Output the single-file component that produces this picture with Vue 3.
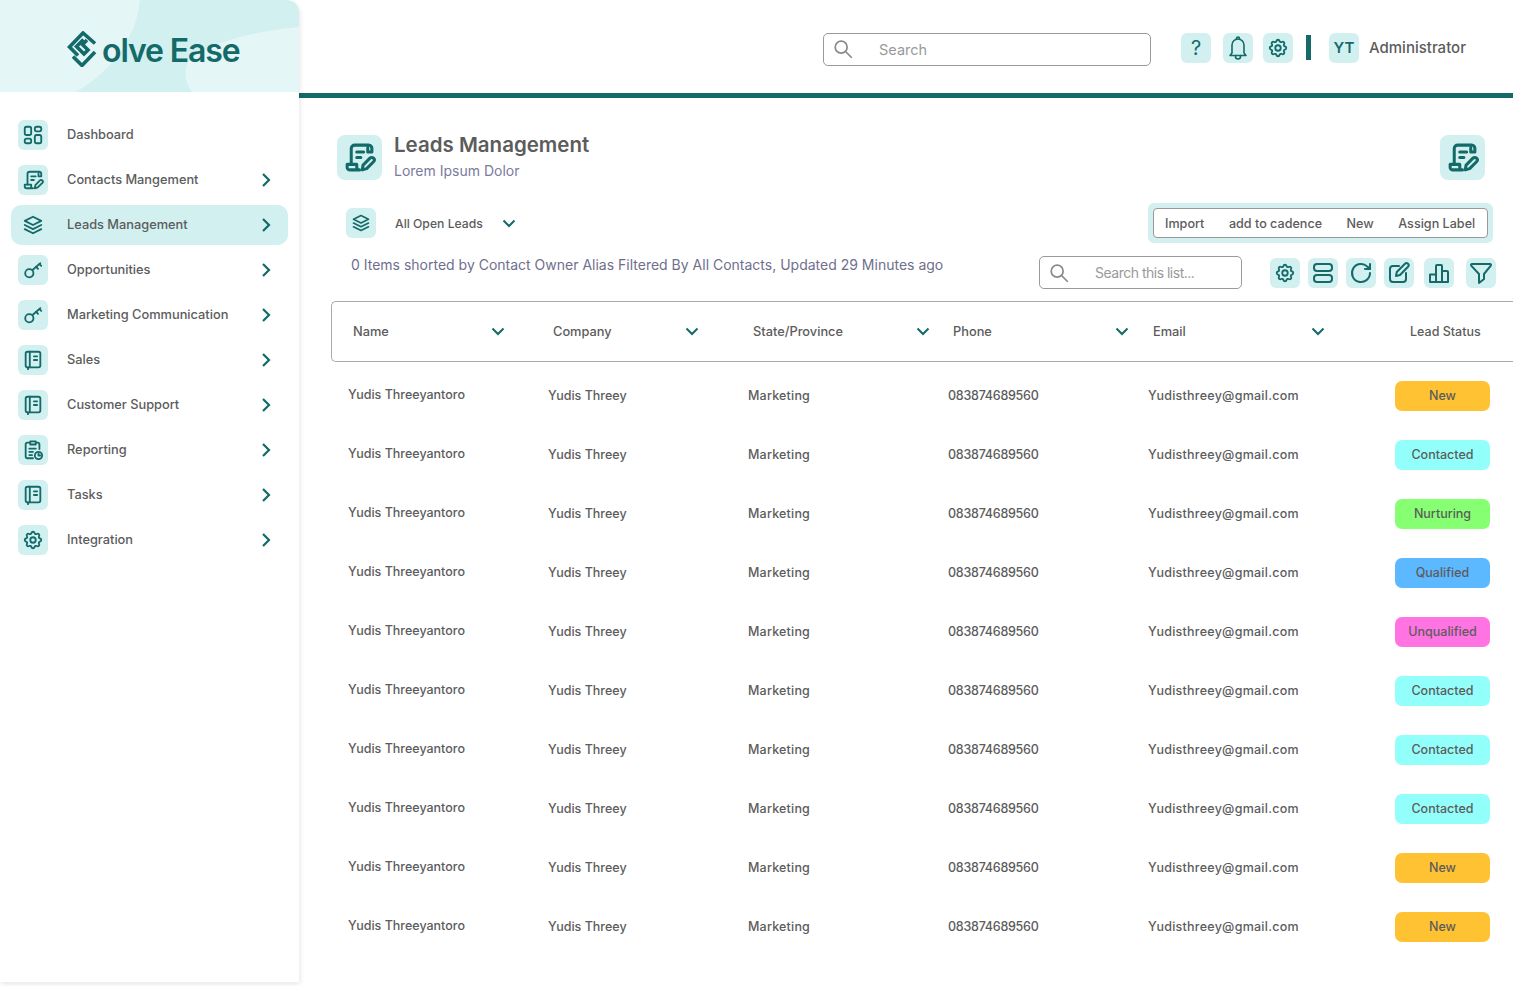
<script setup>
const icons = {
  grid: ['M5 3h3a2 2 0 0 1 2 2v5a2 2 0 0 1-2 2H5a2 2 0 0 1-2-2V5a2 2 0 0 1 2-2z', 'M16 3h3a2 2 0 0 1 2 2v1a2 2 0 0 1-2 2h-3a2 2 0 0 1-2-2V5a2 2 0 0 1 2-2z', 'M5 16h3a2 2 0 0 1 2 2v1a2 2 0 0 1-2 2H5a2 2 0 0 1-2-2v-1a2 2 0 0 1 2-2z', 'M16 12h3a2 2 0 0 1 2 2v5a2 2 0 0 1-2 2h-3a2 2 0 0 1-2-2v-5a2 2 0 0 1 2-2z'],
  scroll: ['M6 17V5.500A2.500 2.500 0 0 1 8.500 3H19a2.500 2.500 0 0 1 2 2.500V8h-3V5', 'M3 17h7v2a2 2 0 0 0 2 2H5a2 2 0 0 1-2-2z', 'M10 8h5M10 12h3', 'M14 21l.6-3.500 5-5a1.800 1.800 0 0 1 2.600 2.600l-5 5z'],
  layers: ['M12 3l9 4.500-9 4.500-9-4.500z', 'M3 12l9 4.500 9-4.500', 'M3 16.500l9 4.500 9-4.500'],
  key: ['M12.500 15.500a4.500 4.500 0 1 1-9 0 4.500 4.500 0 0 1 9 0z', 'M11.500 12L20 4.500', 'M15.500 8.500l2 2.200M19 5.500l2 2'],
  book: ['M6 3h12a2 2 0 0 1 2 2v13a2 2 0 0 1-2 2H6a2 2 0 0 1-2-2V5a2 2 0 0 1 2-2z', 'M8.500 3v17', 'M13 8h3.500M13 12h3.500', 'M6.500 20v2'],
  report: ['M9 4H6a2 2 0 0 0-2 2v13a2 2 0 0 0 2 2h6', 'M15 4h2a2 2 0 0 1 2 2v5', 'M9 2.500h6V6H9z', 'M8 10.500h7M8 14h4M8 17.500h3', 'M22 18a4 4 0 1 1-8 0 4 4 0 0 1 8 0z', 'M18 16v2h2'],
  gear: ['M10.325 4.317c.426-1.756 2.924-1.756 3.350 0a1.724 1.724 0 002.573 1.066c1.543-.94 3.310.826 2.370 2.370a1.724 1.724 0 001.065 2.572c1.756.426 1.756 2.924 0 3.350a1.724 1.724 0 00-1.066 2.573c.94 1.543-.826 3.310-2.370 2.370a1.724 1.724 0 00-2.572 1.065c-.426 1.756-2.924 1.756-3.350 0a1.724 1.724 0 00-2.573-1.066c-1.543.94-3.310-.826-2.370-2.370a1.724 1.724 0 00-1.065-2.572c-1.756-.426-1.756-2.924 0-3.350a1.724 1.724 0 001.066-2.573c-.94-1.543.826-3.310 2.370-2.370.996.608 2.296.07 2.572-1.065z', 'M15 12a3 3 0 1 1-6 0 3 3 0 0 1 6 0z'],
  bell: ['M18 17V9a6 6 0 0 0-12 0v8l-2 2.500h16z', 'M10.500 3.200V2.500a1.500 1.500 0 0 1 3 0v.7', 'M9.500 19.500v1a2.500 2.500 0 0 0 5 0v-1'],
  rows: ['M6 3h12a3 3 0 0 1 3 3v1a3 3 0 0 1-3 3H6a3 3 0 0 1-3-3V6a3 3 0 0 1 3-3z', 'M6 14h12a3 3 0 0 1 3 3v1a3 3 0 0 1-3 3H6a3 3 0 0 1-3-3v-1a3 3 0 0 1 3-3z'],
  refresh: ['M21 12a9 9 0 1 1-2.700-6.400L21 8', 'M21 3v5h-5'],
  edit: ['M12 5H6a3 3 0 0 0-3 3v10a3 3 0 0 0 3 3h10a3 3 0 0 0 3-3v-6', 'M9 15l.8-4L18 2.800a2 2 0 0 1 3 3L13 14z'],
  chart: ['M3 13.500h6V21H3z', 'M9 5a1 1 0 0 1 1-1h4a1 1 0 0 1 1 1v16H9z', 'M15 10h5a1 1 0 0 1 1 1v10h-6z'],
  filter: ['M3 3h18a1 1 0 0 1 .8 1.600L15 13v5l-5 4v-9L2.200 4.600A1 1 0 0 1 3 3z'],
  search: ['M16.500 10a6.500 6.500 0 1 1-13 0 6.500 6.500 0 0 1 13 0z', 'M15 15l6 6']
}

const navItems = [
  { label: 'Dashboard', icon: 'grid' },
  { label: 'Contacts Mangement', icon: 'scroll', more: true },
  { label: 'Leads Management', icon: 'layers', more: true, active: true },
  { label: 'Opportunities', icon: 'key', more: true },
  { label: 'Marketing Communication', icon: 'key', more: true },
  { label: 'Sales', icon: 'book', more: true },
  { label: 'Customer Support', icon: 'book', more: true },
  { label: 'Reporting', icon: 'report', more: true },
  { label: 'Tasks', icon: 'book', more: true },
  { label: 'Integration', icon: 'gear', more: true }
]

const columns = ['Name', 'Company', 'State/Province', 'Phone', 'Email']
const statuses = ['New', 'Contacted', 'Nurturing', 'Qualified', 'Unqualified', 'Contacted', 'Contacted', 'Contacted', 'New', 'New']
const toolIcons = ['gear', 'rows', 'refresh', 'edit', 'chart', 'filter']
const actions = ['Import', 'add to cadence', 'New', 'Assign Label']
</script>

<template>
  <div class="page">
    <aside class="sidebar">
      <div class="brand">
        <svg class="brand-bg" viewBox="0 0 299 92" preserveAspectRatio="none">
          <path d="M0 0H140C136 40 110 72 76 92H0z" fill="#e5f6f6" />
          <path d="M299 27C250 32 205 44 190 60C182 70 186 84 192 92H299z" fill="#e5f6f6" />
        </svg>
        <svg class="brand-mark" viewBox="0 0 30 36" fill="none" stroke="#136a69" stroke-width="3.600">
          <path d="M28 12.500L16 2 2.500 16 11 24.500" />
          <path d="M16.500 8.500L9.500 15.500 17 23 21 19 15.500 13.500 20 9" />
          <path d="M28 21L15 34.500 6 25.500" />
        </svg>
        <span class="brand-name">olve Ease</span>
      </div>
      <nav class="nav">
        <a v-for="item in navItems" :key="item.label" class="nav-item" :class="{ active: item.active }">
          <span class="tile">
            <svg class="icon" viewBox="0 0 24 24"><path v-for="d in icons[item.icon]" :key="d" :d="d" /></svg>
          </span>
          <span class="nav-label">{{ item.label }}</span>
          <svg v-if="item.more" class="chevron-right" viewBox="0 0 10 16"><path d="M2 2l6 6-6 6" /></svg>
        </a>
      </nav>
    </aside>

    <main class="main">
      <header class="topbar">
        <div class="search top-search">
          <svg class="search-icon" viewBox="0 0 24 24"><path v-for="d in icons.search" :key="d" :d="d" /></svg>
          <span>Search</span>
        </div>
        <div class="top-tools">
          <span class="tile question">?</span>
          <span class="tile tile-bell"><svg class="icon" viewBox="0 0 24 24"><path v-for="d in icons.bell" :key="d" :d="d" /></svg></span>
          <span class="tile tile-gear"><svg class="icon" viewBox="0 0 24 24"><path v-for="d in icons.gear" :key="d" :d="d" /></svg></span>
          <span class="divider"></span>
          <span class="tile initials">YT</span>
          <span class="admin">Administrator</span>
        </div>
      </header>

      <section class="content">
        <div class="title-row">
          <span class="tile tile-lg"><svg class="icon" viewBox="0 0 24 24"><path v-for="d in icons.scroll" :key="d" :d="d" /></svg></span>
          <div class="title-text">
            <h1>Leads Management</h1>
            <p>Lorem Ipsum Dolor</p>
          </div>
          <span class="tile tile-lg tile-end"><svg class="icon" viewBox="0 0 24 24"><path v-for="d in icons.scroll" :key="d" :d="d" /></svg></span>
        </div>

        <div class="view-row">
          <span class="tile"><svg class="icon" viewBox="0 0 24 24"><path v-for="d in icons.layers" :key="d" :d="d" /></svg></span>
          <span class="view-name">All Open Leads</span>
          <svg class="chevron-down view-chevron" viewBox="0 0 14 9"><path d="M1.500 1.500L7 7l5.500-5.500" /></svg>
          <div class="actions">
            <div class="actions-inner">
              <span v-for="action in actions" :key="action">{{ action }}</span>
            </div>
          </div>
        </div>

        <div class="filter-row">
          <span class="summary">0 Items shorted by Contact Owner Alias Filtered By All Contacts, Updated 29 Minutes ago</span>
          <div class="search list-search">
            <svg class="search-icon" viewBox="0 0 24 24"><path v-for="d in icons.search" :key="d" :d="d" /></svg>
            <span>Search this list...</span>
          </div>
          <div class="tools">
            <span v-for="tool in toolIcons" :key="tool" class="tile">
              <svg class="icon" viewBox="0 0 24 24"><path v-for="d in icons[tool]" :key="d" :d="d" /></svg>
            </span>
          </div>
        </div>

        <div class="table">
          <div class="table-head">
            <div v-for="col in columns" :key="col" class="head-cell">
              <span>{{ col }}</span>
              <svg class="chevron-down" viewBox="0 0 14 9"><path d="M1.500 1.500L7 7l5.500-5.500" /></svg>
            </div>
            <div class="head-status">Lead Status</div>
          </div>
          <div v-for="(status, i) in statuses" :key="i" class="table-row">
            <span class="cell-name">Yudis Threeyantoro</span>
            <span>Yudis Threey</span>
            <span class="cell-state">Marketing</span>
            <span class="cell-phone">083874689560</span>
            <span class="cell-email">Yudisthreey@gmail.com</span>
            <span class="badge" :class="'badge-' + status.toLowerCase()">{{ status }}</span>
          </div>
        </div>
      </section>
    </main>
  </div>
</template>

<style>
html, body {
  margin: 0;
  background: #fff;
}
</style>

<style scoped>
.page {
  display: flex;
  width: 1513px;
  height: 986px;
  overflow: hidden;
  background: #fff;
  color: #5c5c5c;
  font-family: Inter, "Open Sans", sans-serif;
  font-weight: 500;
}

/* Sidebar */
.sidebar {
  flex: none;
  width: 299px;
  height: 982px;
  background: #fff;
  box-shadow: 1px 2px 5px rgba(0, 0, 0, 0.1);
  border-top-right-radius: 12px;
  position: relative;
  z-index: 1;
}

.brand {
  position: relative;
  display: flex;
  align-items: center;
  height: 92px;
  padding: 6px 0 0 67px;
  box-sizing: border-box;
  background: #d2f0f0;
  border-top-right-radius: 12px;
  overflow: hidden;
}

.brand-bg {
  position: absolute;
  inset: 0;
  width: 100%;
  height: 100%;
}

.brand-mark {
  position: relative;
  width: 30px;
  height: 36px;
}

.brand-name {
  position: relative;
  margin-left: 5px;
  margin-top: 2px;
  color: #136a69;
  font-size: 32px;
  font-weight: 600;
  letter-spacing: -1.100px;
  white-space: nowrap;
}

.nav {
  display: flex;
  flex-direction: column;
  gap: 5px;
  padding: 23px 0 0 11px;
}

.nav-item {
  display: flex;
  align-items: center;
  width: 277px;
  height: 40px;
  padding-left: 7px;
  box-sizing: border-box;
  border-radius: 10px;
}

.nav-item.active {
  background: #d2f0f0;
}

.nav-label {
  margin-left: 19px;
  margin-top: -1px;
  font-size: 12.800px;
  white-space: nowrap;
}

.chevron-right {
  width: 10px;
  height: 16px;
  margin-left: auto;
  margin-right: 17px;
  fill: none;
  stroke: #136a69;
  stroke-width: 2.200;
}

/* Shared bits */
.tile {
  flex: none;
  display: flex;
  align-items: center;
  justify-content: center;
  width: 30px;
  height: 30px;
  border-radius: 6px;
  background: #d2f0f0;
  color: #136a69;
}

.icon {
  width: 22px;
  height: 22px;
  fill: none;
  stroke: #136a69;
  stroke-width: 2;
  stroke-linecap: round;
  stroke-linejoin: round;
}

.chevron-down {
  width: 14px;
  height: 9px;
  fill: none;
  stroke: #136a69;
  stroke-width: 2;
}

.search {
  display: flex;
  align-items: center;
  box-sizing: border-box;
  background: #fff;
  border: 1px solid #9a9a9a;
  border-radius: 5px;
  color: #9a9a9a;
  font-weight: 400;
  font-size: 14px;
}

.search-icon {
  flex: none;
  width: 22px;
  height: 22px;
  fill: none;
  stroke: #8a8a8a;
  stroke-width: 1.900;
  stroke-linecap: round;
}

/* Top bar */
.main {
  flex: 1;
  min-width: 0;
}

.topbar {
  display: flex;
  align-items: center;
  height: 98px;
  box-sizing: border-box;
  border-bottom: 5px solid #136a69;
}

.top-search {
  width: 328px;
  height: 33px;
  margin-left: 524px;
  margin-top: 5px;
  padding-left: 8px;
}

.top-search span {
  margin-left: 25px;
  font-size: 14.500px;
}

.top-tools {
  display: flex;
  align-items: center;
  margin-left: 30px;
  margin-top: 2px;
}

.top-tools .tile-bell {
  margin-left: 12px;
}

.top-tools .tile-gear {
  margin-left: 10px;
}

.tile-bell .icon {
  width: 24px;
  height: 24px;
  stroke-width: 1.600;
}

.question {
  font-size: 20px;
  font-weight: 400;
}

.divider {
  width: 5px;
  height: 25px;
  margin: 0 18px 0 13px;
  background: #136a69;
}

.initials {
  font-size: 15px;
  font-weight: 600;
}

.admin {
  margin-left: 10px;
  font-size: 15px;
  white-space: nowrap;
}

/* Content */
.content {
  padding-top: 37px;
}

.title-row {
  display: flex;
  align-items: center;
  height: 45px;
  padding-left: 38px;
}

.tile-lg {
  width: 45px;
  height: 45px;
  border-radius: 8px;
}

.tile-lg .icon {
  width: 33px;
  height: 33px;
  stroke-width: 2.200;
}

.title-text {
  margin-left: 12px;
}

.title-text h1 {
  margin: -1px 0 0;
  font-size: 20.500px;
  line-height: 24px;
  font-weight: 600;
}

.title-text p {
  margin: 4px 0 0;
  font-size: 14px;
  line-height: 20px;
  font-weight: 400;
  color: #7b7b9d;
}

.tile-end {
  margin-left: auto;
  margin-right: 28px;
}

.view-row {
  display: flex;
  align-items: center;
  height: 40px;
  margin-top: 23px;
  padding-left: 47px;
}

.view-row .icon {
  width: 20px;
  height: 20px;
}

.view-name {
  margin-left: 19px;
  font-size: 12.200px;
}

.view-chevron {
  margin-left: 19px;
}

.actions {
  margin-left: auto;
  margin-right: 20px;
  padding: 5px;
  border-radius: 6px;
  background: #d2f0f0;
}

.actions-inner {
  display: flex;
  align-items: center;
  gap: 24.500px;
  width: 335px;
  height: 30px;
  box-sizing: border-box;
  padding: 0 11px;
  background: #fff;
  border: 1px solid #999;
  border-radius: 4px;
  font-size: 12.600px;
  white-space: nowrap;
}

.filter-row {
  display: flex;
  align-items: center;
  height: 33px;
  margin-top: 13px;
  padding-left: 52px;
}

.summary {
  width: 688px;
  flex: none;
  margin-top: -17px;
  font-size: 14px;
  font-weight: 400;
  color: #6f6f8d;
  white-space: nowrap;
}

.list-search {
  width: 203px;
  height: 33px;
  padding-left: 8px;
  letter-spacing: -0.500px;
}

.list-search span {
  margin-left: 25px;
}

.tools {
  display: flex;
  gap: 8px;
  margin-left: 28px;
}

.tools .icon {
  width: 24px;
  height: 24px;
}

.tools .tile:first-child .icon {
  width: 22px;
  height: 22px;
}

.tools .tile:nth-child(5) {
  margin-left: 2px;
}

.tools .tile:nth-child(6) {
  margin-left: 4px;
}

/* Table */
.table {
  margin: 12px 0 0 32px;
}

.table-head {
  display: grid;
  grid-template-columns: repeat(5, 200px) 1fr;
  align-items: center;
  height: 61px;
  box-sizing: border-box;
  border: 1px solid #aaa;
  border-right: 0;
  border-radius: 5px 0 0 5px;
  font-size: 12.800px;
}

.head-cell {
  display: flex;
  align-items: center;
  justify-content: space-between;
  padding: 0 20px 0 21px;
}

.head-cell span {
  margin-top: -1px;
}

.head-cell:nth-child(1) { padding-right: 27px; }
.head-cell:nth-child(2) { padding-right: 33px; }
.head-cell:nth-child(3) { padding-right: 2px; }
.head-cell:nth-child(4) { padding-right: 3px; }
.head-cell:nth-child(5) { padding-right: 7px; }

.head-status {
  margin-top: -1px;
  padding-left: 78px;
  font-size: 12.500px;
  white-space: nowrap;
}

.table-row {
  display: grid;
  grid-template-columns: repeat(5, 200px) 1fr;
  align-items: center;
  height: 59px;
  padding-left: 17px;
  font-size: 12.500px;
}

.table-head + .table-row {
  margin-top: 4px;
}

.cell-name {
  margin-top: -2px;
}

.cell-state {
  letter-spacing: 0.200px;
}

.cell-phone {
  letter-spacing: -0.250px;
}

.cell-email {
  letter-spacing: 0.250px;
}

.badge {
  display: flex;
  align-items: center;
  justify-content: center;
  width: 95px;
  height: 30px;
  margin-left: 47px;
  border-radius: 7px;
}

.badge-new { background: #ffc233; }
.badge-contacted { background: #92fffb; }
.badge-nurturing { background: #87ff73; }
.badge-qualified { background: #5cb8ff; }
.badge-unqualified { background: #ff73e3; }
</style>
